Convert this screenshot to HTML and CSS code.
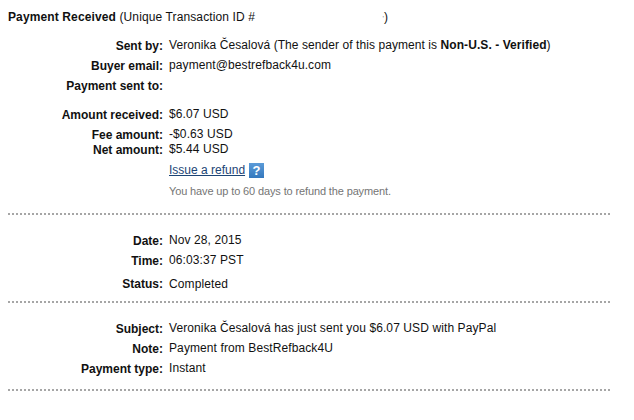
FILE: index.html
```html
<!DOCTYPE html>
<html lang="en">
<head>
  <meta charset="UTF-8">
  <title>Transaction Details</title>
  <link rel="stylesheet" href="styles.css">
</head>
<body>
  <div class="heading"><b>Payment Received</b> (Unique Transaction ID #<span class="txn-id">'</span>)</div>

  <!-- Payment -->
  <dl class="details payment">
    <dt>Sent by:</dt>
    <dd class="sender">Veronika Česalová (The sender of this payment is <b>Non-U.S. - Verified</b>)</dd>
    <dt>Buyer email:</dt>
    <dd>payment@bestrefback4u.com</dd>
    <dt>Payment sent to:</dt>
    <dd></dd>
    <dt>Amount received:</dt>
    <dd>$6.07 USD</dd>
    <dt>Fee amount:</dt>
    <dd>-$0.63 USD</dd>
    <dt>Net amount:</dt>
    <dd>$5.44 USD</dd>
    <dt></dt>
    <dd class="refund"><a href="#">Issue a refund</a><span class="help">?</span></dd>
    <dt></dt>
    <dd class="hint">You have up to 60 days to refund the payment.</dd>
  </dl>

  <!-- Date and status -->
  <dl class="details timing">
    <dt>Date:</dt>
    <dd>Nov 28, 2015</dd>
    <dt>Time:</dt>
    <dd>06:03:37 PST</dd>
    <dt class="status">Status:</dt>
    <dd>Completed</dd>
  </dl>

  <!-- Message -->
  <dl class="details message">
    <dt>Subject:</dt>
    <dd>Veronika Česalová has just sent you $6.07 USD with PayPal</dd>
    <dt>Note:</dt>
    <dd>Payment from BestRefback4U</dd>
    <dt>Payment type:</dt>
    <dd>Instant</dd>
  </dl>
</body>
</html>
```
FILE: styles.css
```css
body {
  margin: 0;
  padding: 10px 24px 0 8px;
  font-family: "Liberation Sans", Arial, sans-serif;
  font-size: 12px;
  line-height: 15px;
  color: #111;
  background: #fff;
}
.heading {
  white-space: nowrap;
  height: 28px;
  letter-spacing: 0.12px;
}
.txn-id {
  display: inline-block;
  width: 129px;
  font-size: 8px;
  text-align: right;
  color: #888;
}
.details {
  box-sizing: border-box;
  display: grid;
  grid-template-columns: 155px 1fr;
  column-gap: 6px;
  margin: 0;
  white-space: nowrap;
  /* dotted divider */
  background: linear-gradient(to right, #a6a6a6 2px, transparent 2px) left bottom / 4px 2px repeat-x;
}
.details dt {
  padding-top: 1px;
  font-weight: bold;
  text-align: right;
}
.details dd {
  margin: 0;
  letter-spacing: 0.1px;
}
.details .sender {
  letter-spacing: 0.07px;
}
.payment {
  height: 177px;
  grid-template-rows: 20px 20px 29px 20px 15px 20px 22px 1fr;
}
.timing {
  height: 88px;
  padding-top: 18px;
  grid-template-rows: 20px 24px 1fr;
}
.timing .status {
  padding-top: 0;
}
.message {
  height: 88px;
  padding-top: 18px;
  grid-template-rows: 20px 20px 1fr;
}
.refund {
  display: flex;
  align-items: flex-start;
}
.payment .refund {
  padding-top: 1px;
  letter-spacing: 0;
}
.refund a {
  color: #1c4475;
}
.help {
  width: 15px;
  height: 15px;
  margin-left: 4px;
  line-height: 15px;
  font-size: 13px;
  text-align: center;
  font-weight: bold;
  color: #fff;
  background: linear-gradient(#5b9bd8, #3478bd);
}
.payment .hint {
  font-size: 11px;
  letter-spacing: -0.13px;
  color: #757575;
}
```
